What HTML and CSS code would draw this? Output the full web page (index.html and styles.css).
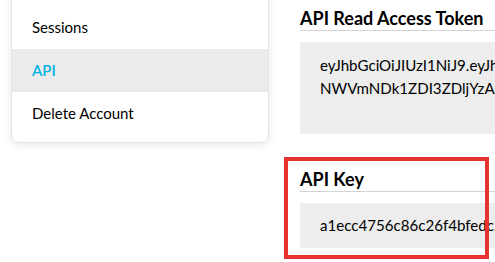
FILE: index.html
```html
<!DOCTYPE html>
<html>
<head>
<meta charset="utf-8">
<link rel="stylesheet" href="styles.css">
</head>
<body>
<div class="page">
  <aside class="sidebar">
    <nav class="card">
      <a class="item">Sessions</a>
      <a class="item active">API</a>
      <a class="item">Delete Account</a>
    </nav>
  </aside>
  <main class="content">
    <section class="block">
      <h3 class="title">API Read Access Token</h3>
      <div class="box tall">eyJhbGciOiJIUzI1NiJ9.eyJhdWQiOiJhMWVjYzQ3NTZjODZjMjZmNGJmZWRjMj<br>NWVmNDk1ZDI3ZDljYzAxNTA2NGQ5ZDUiLCJzdWIiOiI1ZWY</div>
    </section>
    <section class="block key">
      <h3 class="title">API Key</h3>
      <div class="box">a1ecc4756c86c26f4bfedc2a8ec7b5ef</div>
      <div class="highlight"></div>
    </section>
  </main>
</div>
</body>
</html>
```
FILE: styles.css
```css
html, body {
  margin: 0;
  padding: 0;
  background: #fff;
  overflow: hidden;
}
body {
  font-family: "Lato", "Open Sans", sans-serif;
  color: #000;
  width: 495px;
  height: 262px;
}
.page {
  display: flex;
  gap: 31px;
  padding-left: 11px;
  width: 900px;
}
.sidebar {
  width: 258px;
  flex: none;
}
.card {
  display: flex;
  flex-direction: column;
  margin-top: -20px;
  padding-top: 25px;
  padding-bottom: 7px;
  background: #fff;
  border: 1px solid #e4e4e4;
  border-radius: 8px;
  box-shadow: 0 2px 8px rgba(0,0,0,0.10);
}
.item {
  height: 43px;
  line-height: 43px;
  padding-left: 20px;
  font-size: 15px;
  color: #000;
}
.item.active {
  background: #ebebeb;
  color: #01b4e4;
  font-weight: 600;
}
.content {
  width: 560px;
  flex: none;
}
.block {
  margin-top: 7px;
}
.block.key {
  position: relative;
  margin-top: 34px;
}
.title {
  margin: 0;
  font-size: 18px;
  font-weight: 700;
  line-height: 23px;
  border-bottom: 1px solid #d4d4d4;
}
.box {
  margin-top: 11px;
  background: #ededed;
  padding: 11px 20px;
  font-size: 15.1px;
  line-height: 23px;
  white-space: nowrap;
}
.box.tall {
  height: 69px;
  padding-top: 12px;
}
.highlight {
  position: absolute;
  left: -16px;
  top: -11px;
  width: 197px;
  height: 94px;
  border: 4px solid #e83232;
}
```
